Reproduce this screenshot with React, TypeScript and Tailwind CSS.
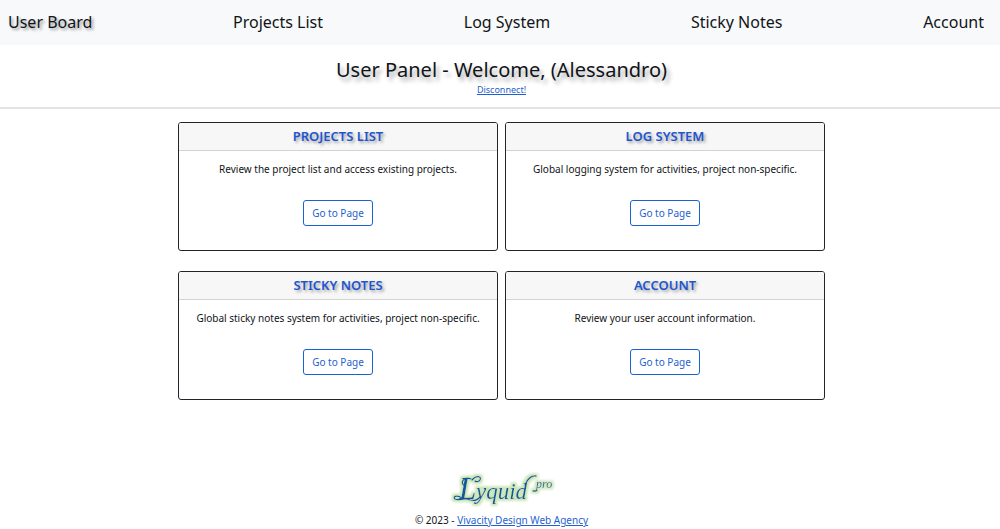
type TPanel = {
  title: string;
  text: string;
};

const navLinks = ["Projects List", "Log System", "Sticky Notes", "Account"];

const panels: TPanel[] = [
  {
    title: "PROJECTS LIST",
    text: "Review the project list and access existing projects.",
  },
  {
    title: "LOG SYSTEM",
    text: "Global logging system for activities, project non-specific.",
  },
  {
    title: "STICKY NOTES",
    text: "Global sticky notes system for activities, project non-specific.",
  },
  {
    title: "ACCOUNT",
    text: "Review your user account information.",
  },
];

const Navbar = () => {
  return (
    <nav className="flex h-[45px] items-center justify-between bg-[#f8f9fa] pr-4 pb-px pl-2 text-base leading-6">
      <a href="#" className="[text-shadow:2px_2px_3px_rgba(0,0,0,0.4)]">
        User Board
      </a>
      {navLinks.map((link) => (
        <a key={link} href="#">
          {link}
        </a>
      ))}
    </nav>
  );
};

const PanelCard = ({ panel }: { panel: TPanel }) => {
  return (
    <section className="overflow-hidden rounded-[3px] border border-[#212529] text-center">
      <h2 className="border-b border-[#d3d3d3] bg-[#f7f7f7] text-[13px] leading-[27px] font-semibold text-[#1d55cf] [text-shadow:2px_2px_3px_rgba(0,0,0,0.35)]">
        {panel.title}
      </h2>
      <div className="px-3 pt-2.5 pb-6">
        <p className="text-[10px] leading-4">{panel.text}</p>
        <button
          type="button"
          className="mt-[23px] h-[26px] w-[70px] rounded-[3px] border border-[#1763cf] text-[10px] leading-4 text-[#1f5fcf]"
        >
          Go to Page
        </button>
      </div>
    </section>
  );
};

const Logo = () => {
  return (
    <svg
      viewBox="0 0 112 44"
      className="h-11 w-28"
      role="img"
      aria-label="Lyquid pro"
    >
      <defs>
        <filter id="glow" x="-10%" y="-20%" width="120%" height="140%">
          <feMorphology in="SourceAlpha" operator="dilate" radius="2" />
          <feGaussianBlur stdDeviation="1" result="halo" />
          <feFlood floodColor="#cbe6b9" />
          <feComposite in2="halo" operator="in" result="green" />
          <feMerge>
            <feMergeNode in="green" />
            <feMergeNode in="SourceGraphic" />
          </feMerge>
        </filter>
      </defs>
      <g
        filter="url(#glow)"
        fill="#105a9c"
        fontFamily="'Liberation Serif', serif"
        fontStyle="italic"
      >
        <text x="13" y="31" fontSize="31">
          L
        </text>
        <text x="30" y="31" fontSize="23">
          yquid
        </text>
        <text x="90" y="20" fontSize="12">
          pro
        </text>
        {/* flourishes */}
        <g
          fill="none"
          stroke="#105a9c"
          strokeWidth="1.3"
          strokeLinecap="round"
        >
          <path d="M25 11C18 8 13 15 19 18" />
          <path d="M26 12C30 7 36 8 34 12C33 14 30 14 29 13" />
          <path d="M16 30C12 27 6 28 9 31C12 33 17 30 21 31C26 33 31 33 34 29" />
          <path d="M79 17C81 11 86 7 90 8" />
          <path d="M90 23L87 23" />
        </g>
      </g>
    </svg>
  );
};

const App = () => {
  return (
    <div className="bg-white font-['Noto_Sans','Open_Sans',sans-serif] text-[#111418]">
      <Navbar />

      <header className="flex flex-col items-center border-b-2 border-[#e4e4e4] pt-[11px] pb-[11px] pl-[3px]">
        <h1 className="text-xl leading-7 [text-shadow:3px_4px_4px_rgba(0,0,0,0.35)]">
          User Panel - Welcome, (Alessandro)
        </h1>
        <a
          href="#"
          className="text-[9px] leading-3 text-[#1f5fcf] underline"
        >
          Disconnect!
        </a>
      </header>

      <main className="pt-[13px] pl-[3px]">
        <div className="mx-auto grid max-w-[647px] grid-cols-2 gap-x-[7px] gap-y-5">
          {panels.map((panel) => (
            <PanelCard key={panel.title} panel={panel} />
          ))}
        </div>
      </main>

      <footer className="flex flex-col items-center pt-[68px] pl-[3px]">
        <Logo />
        <p className="text-[10px] leading-4">
          © 2023 -{" "}
          <a href="#" className="text-[#1f5fcf] underline">
            Vivacity Design Web Agency
          </a>
        </p>
      </footer>
    </div>
  );
};

export default App;
